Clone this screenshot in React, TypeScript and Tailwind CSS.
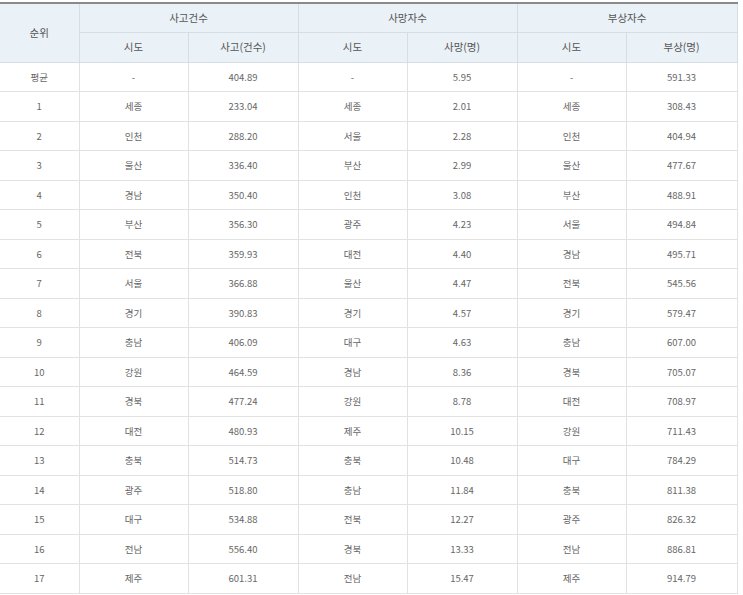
const data: [string, string, string, string, string, string, string][] = [
  ["평균", "-", "404.89", "-", "5.95", "-", "591.33"],
  ["1", "세종", "233.04", "세종", "2.01", "세종", "308.43"],
  ["2", "인천", "288.20", "서울", "2.28", "인천", "404.94"],
  ["3", "울산", "336.40", "부산", "2.99", "울산", "477.67"],
  ["4", "경남", "350.40", "인천", "3.08", "부산", "488.91"],
  ["5", "부산", "356.30", "광주", "4.23", "서울", "494.84"],
  ["6", "전북", "359.93", "대전", "4.40", "경남", "495.71"],
  ["7", "서울", "366.88", "울산", "4.47", "전북", "545.56"],
  ["8", "경기", "390.83", "경기", "4.57", "경기", "579.47"],
  ["9", "충남", "406.09", "대구", "4.63", "충남", "607.00"],
  ["10", "강원", "464.59", "경남", "8.36", "경북", "705.07"],
  ["11", "경북", "477.24", "강원", "8.78", "대전", "708.97"],
  ["12", "대전", "480.93", "제주", "10.15", "강원", "711.43"],
  ["13", "충북", "514.73", "충북", "10.48", "대구", "784.29"],
  ["14", "광주", "518.80", "충남", "11.84", "충북", "811.38"],
  ["15", "대구", "534.88", "전북", "12.27", "광주", "826.32"],
  ["16", "전남", "556.40", "경북", "13.33", "전남", "886.81"],
  ["17", "제주", "601.31", "전남", "15.47", "제주", "914.79"],
];

export default function App() {
  const th = "border border-[#d6dde5] bg-[#eaf1f7] font-normal text-[#555] text-[10.5px]";
  return (
    <div className="w-[743px] h-[595px] bg-white pt-[2px]" style={{ fontFamily: '"Noto Sans CJK KR", "Noto Sans", sans-serif' }}>
      <table className="w-[737px] border-collapse table-fixed text-center border-t-2 border-t-[#8a8a8a]">
        <colgroup>
          <col className="w-[79px]" />
          <col className="w-[109px]" />
          <col className="w-[110px]" />
          <col className="w-[109px]" />
          <col className="w-[110px]" />
          <col className="w-[109px]" />
          <col className="w-[111px]" />
        </colgroup>
        <thead>
          <tr className="h-[29px]">
            <th rowSpan={2} className={th + " border-l-0"}>순위</th>
            <th colSpan={2} className={th}>사고건수</th>
            <th colSpan={2} className={th}>사망자수</th>
            <th colSpan={2} className={th}>부상자수</th>
          </tr>
          <tr className="h-[30px]">
            <th className={th}>시도</th>
            <th className={th}>사고(건수)</th>
            <th className={th}>시도</th>
            <th className={th}>사망(명)</th>
            <th className={th}>시도</th>
            <th className={th}>부상(명)</th>
          </tr>
        </thead>
        <tbody>
          {data.map((r, i) => (
            <tr key={i} className="h-[29.5px]">
              {r.map((c, j) => (
                <td key={j} className={"border border-[#e2e2e2] text-[9.5px] text-[#666] p-0" + (j === 0 ? " border-l-0" : "")}>
                  {c}
                </td>
              ))}
            </tr>
          ))}
        </tbody>
      </table>
    </div>
  );
}
